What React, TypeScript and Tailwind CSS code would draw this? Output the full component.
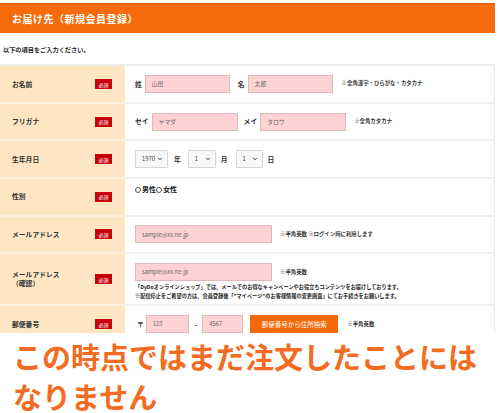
import { ChevronDown } from "lucide-react";
import type { ReactNode } from "react";

const Badge = () => (
  <span className="w-[17px] h-[10px] bg-[#c7000b] text-white text-[5px] leading-none flex items-center justify-center">
    必須
  </span>
);

const Row = ({
  label,
  sub,
  height,
  cell,
  children,
}: {
  label: string;
  sub?: string;
  height: string;
  cell: string;
  children: ReactNode;
}) => (
  <div className={`flex ${height}`}>
    <div className="w-[125px] shrink-0 bg-[#fee6c3] border-b-2 border-[#fcefdc] flex items-center justify-between pl-3 pr-[13px]">
      <span className="text-[6.8px] font-bold text-[#333] leading-[9px]">
        {label}
        {sub && (
          <>
            <br />
            {sub}
          </>
        )}
      </span>
      <Badge />
    </div>
    <div className={`flex-1 border-b-2 border-[#efefef] pl-[10px] flex leading-none ${cell}`}>{children}</div>
  </div>
);

const Field = ({ w, value }: { w: string; value: string }) => (
  <div className={`${w} h-[18px] bg-[#ffd3d3] border border-[#dcbaba] flex items-center pl-[6px] text-[5.8px] text-[#666]`}>
    {value}
  </div>
);

const Select = ({ w, value }: { w: string; value: string }) => (
  <div className={`${w} h-[18px] bg-[#f8f8f8] border border-[#d6d6d6] rounded-[1px] flex items-center justify-between pl-[6px] pr-[4px] text-[5.8px] text-[#333]`}>
    {value}
    <ChevronDown className="w-[6px] h-[6px]" strokeWidth={4} />
  </div>
);

const Note = ({ className, children }: { className: string; children: ReactNode }) => (
  <span className={`text-[5.4px] leading-none font-bold text-[#333] whitespace-nowrap ${className}`}>{children}</span>
);

const Tag = ({ className, children }: { className: string; children: ReactNode }) => (
  <span className={`text-[6.8px] leading-none font-bold text-[#333] ${className}`}>{children}</span>
);

const Radio = ({ label }: { label: string }) => (
  <span className="flex items-center">
    <span className="w-[6px] h-[6px] rounded-full border border-[#555] bg-white mr-[1px]" />
    <span className="text-[7px] leading-none font-bold text-[#222]">{label}</span>
  </span>
);

export default function App() {
  return (
    <div className="w-[500px] h-[413px] overflow-hidden bg-white font-['Noto_Sans_CJK_JP',sans-serif]">
      <div className="w-[495px] h-[333px] overflow-hidden">
        <div className="mt-[3px] h-[30px] bg-[#f66b0b] border-t border-[#e35800] flex items-center pl-3">
          <h1 className="text-[10px] font-bold text-white tracking-[0.5px]">お届け先（新規会員登録）</h1>
        </div>
        <p className="mt-[12px] ml-[3px] text-[6.2px] font-bold text-[#222]">以下の項目をご入力ください。</p>

        <div className="mt-[10px] border-t-2 border-r border-[#ededed]">
          <Row label="お名前" height="h-[37.6px]" cell="items-center">
            <Tag className="">姓</Tag>
            <div className="ml-[3px]">
              <Field w="w-[85px]" value="山田" />
            </div>
            <Tag className="ml-[8px]">名</Tag>
            <div className="ml-[3px]">
              <Field w="w-[85px]" value="太郎" />
            </div>
            <Note className="ml-[9px]">※全角漢字・ひらがな・カタカナ</Note>
          </Row>

          <Row label="フリガナ" height="h-[37.6px]" cell="items-center">
            <Tag className="">セイ</Tag>
            <div className="ml-[3px]">
              <Field w="w-[86px]" value="ヤマダ" />
            </div>
            <Tag className="ml-[6px]">メイ</Tag>
            <div className="ml-[3px]">
              <Field w="w-[86px]" value="タロウ" />
            </div>
            <Note className="ml-[8px]">※全角カタカナ</Note>
          </Row>

          <Row label="生年月日" height="h-[37.6px]" cell="items-center">
            <Select w="w-[33px]" value="1970" />
            <Tag className="ml-[6px]">年</Tag>
            <div className="ml-[7px]">
              <Select w="w-[28px]" value="1" />
            </div>
            <Tag className="ml-[5px]">月</Tag>
            <div className="ml-[8px]">
              <Select w="w-[27px]" value="1" />
            </div>
            <Tag className="ml-[5px]">日</Tag>
          </Row>

          <Row label="性別" height="h-[37.6px]" cell="items-start pt-[7px]">
            <Radio label="男性" />
            <Radio label="女性" />
          </Row>

          <Row label="メールアドレス" height="h-[37.6px]" cell="items-center">
            <Field w="w-[137px]" value="sample@xx.ne.jp" />
            <Note className="ml-[8px]">※半角英数 ※ログイン時に利用します</Note>
          </Row>

          <Row label="メールアドレス" sub="（確認）" height="h-[52px]" cell="flex-col pt-[9px]">
            <div className="flex items-center">
              <Field w="w-[137px]" value="sample@xx.ne.jp" />
              <Note className="ml-[8px]">※半角英数</Note>
            </div>
            <div className="mt-[2px] text-[5.2px] font-bold text-[#222] leading-[8.5px] whitespace-nowrap">
              <p>「DyDoオンラインショップ」では、メールでのお得なキャンペーンやお役立ちコンテンツをお届けしております。</p>
              <p>※配信停止をご希望の方は、会員登録後「"マイページ"のお客様情報の変更画面」にてお手続きをお願いします。</p>
            </div>
          </Row>

          <Row label="郵便番号" height="h-[38px]" cell="items-center">
            <Tag className="ml-[2px]">〒</Tag>
            <div className="ml-[2px]">
              <Field w="w-[43px]" value="123" />
            </div>
            <Tag className="ml-[6px]">-</Tag>
            <div className="ml-[5px]">
              <Field w="w-[41px]" value="4567" />
            </div>
            <button className="ml-[7px] w-[88px] h-[18px] bg-[#f6690a] text-white text-[6.5px] leading-none flex items-center justify-center">
              郵便番号から住所検索
            </button>
            <Note className="ml-[9px]">※半角英数</Note>
          </Row>
        </div>
      </div>

      <div className="pt-[8px] pl-[13px] text-[29px] leading-[30px] font-bold text-[#f36c21] whitespace-nowrap">
        <p>この時点ではまだ注文したことには</p>
        <p className="mt-[10px]">なりません</p>
      </div>
    </div>
  );
}
